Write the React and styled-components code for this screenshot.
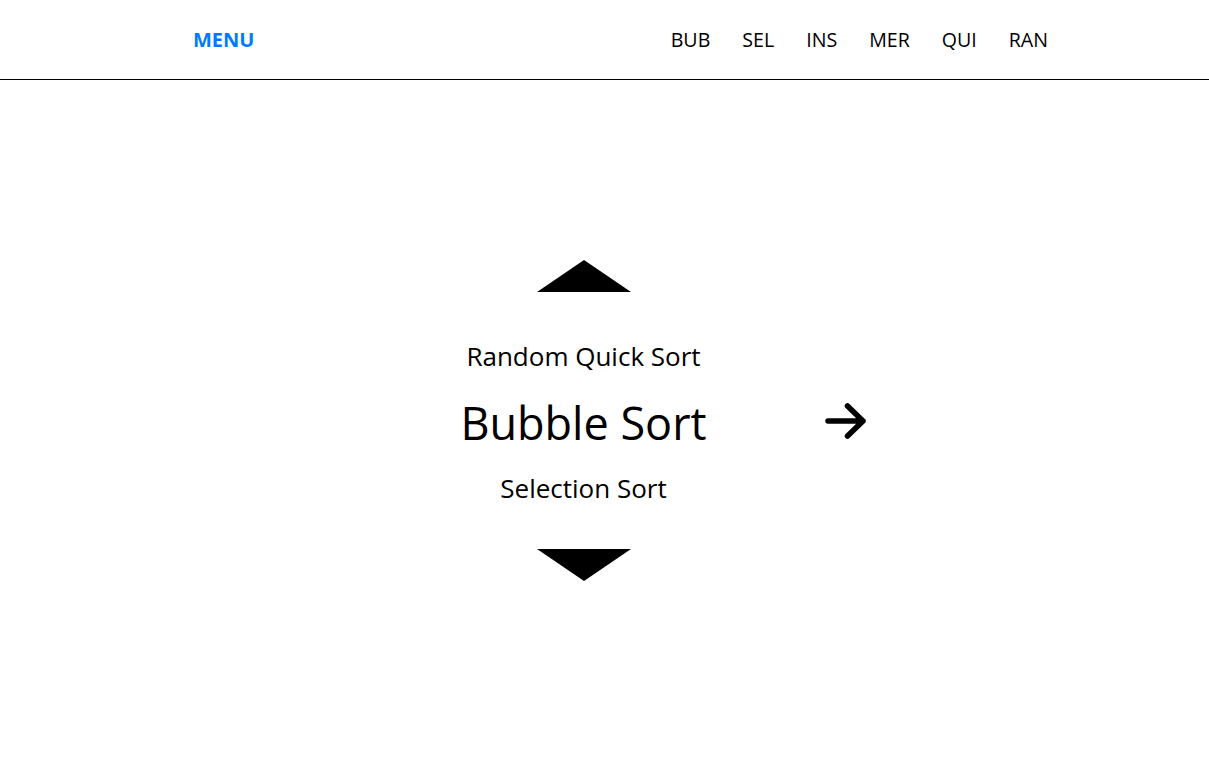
import React from "react";
import styled, { createGlobalStyle } from "styled-components";

const GlobalStyle = createGlobalStyle`
  body {
    margin: 0;
    background: #fff;
    font-family: "Open Sans", "Noto Sans", sans-serif;
    color: #000;
  }
`;

const sorts = ["BUB", "SEL", "INS", "MER", "QUI", "RAN"];

const App = () => {
  return (
    <>
      <GlobalStyle />
      <Header>
        <MenuLabel>MENU</MenuLabel>
        <Nav>
          {sorts.map((s) => (
            <NavItem key={s}>{s}</NavItem>
          ))}
        </Nav>
      </Header>
      <Main>
        <Picker>
          <Column>
            <Triangle dir="up" />
            <Option>Random Quick Sort</Option>
            <Current>Bubble Sort</Current>
            <Option>Selection Sort</Option>
            <Triangle dir="down" />
          </Column>
          <ArrowButton>
            <svg width="42" height="38" viewBox="0 0 42 38" fill="none">
              <path
                d="M3 19H38M22.5 4L38 19L22.5 34"
                stroke="#000"
                strokeWidth="5.5"
                strokeLinecap="round"
                strokeLinejoin="round"
              />
            </svg>
          </ArrowButton>
        </Picker>
      </Main>
    </>
  );
};

export default App;

const Header = styled.header`
  height: 79px;
  border-bottom: 1px solid #000;
  display: flex;
  align-items: center;
  justify-content: space-between;
  padding: 0 161px 0 193px;
`;

const MenuLabel = styled.div`
  color: #007bff;
  font-weight: 700;
  font-size: 20px;
  cursor: pointer;
`;

const Nav = styled.nav`
  display: flex;
  gap: 32px;
`;

const NavItem = styled.div`
  font-size: 19.6px;
  cursor: pointer;
`;

const Main = styled.main`
  height: calc(100vh - 80px);
  display: flex;
  align-items: center;
  justify-content: center;
`;

const Picker = styled.div`
  display: flex;
  align-items: center;
`;

const Column = styled.div`
  width: 482px;
  display: flex;
  flex-direction: column;
  align-items: center;
`;

const Triangle = styled.div`
  width: 0;
  height: 0;
  border-left: 47px solid transparent;
  border-right: 47px solid transparent;
  ${({ dir }) =>
    dir === "up"
      ? "border-bottom: 32px solid #000; margin-bottom: 48px;"
      : "border-top: 32px solid #000; margin-top: 45px;"}
  cursor: pointer;
`;

const Option = styled.div`
  font-size: 26px;
  line-height: 32px;
`;

const Current = styled.div`
  font-size: 45px;
  line-height: 66px;
  margin: 18px 0 16px;
`;

const ArrowButton = styled.div`
  width: 42px;
  display: flex;
  cursor: pointer;
`;
